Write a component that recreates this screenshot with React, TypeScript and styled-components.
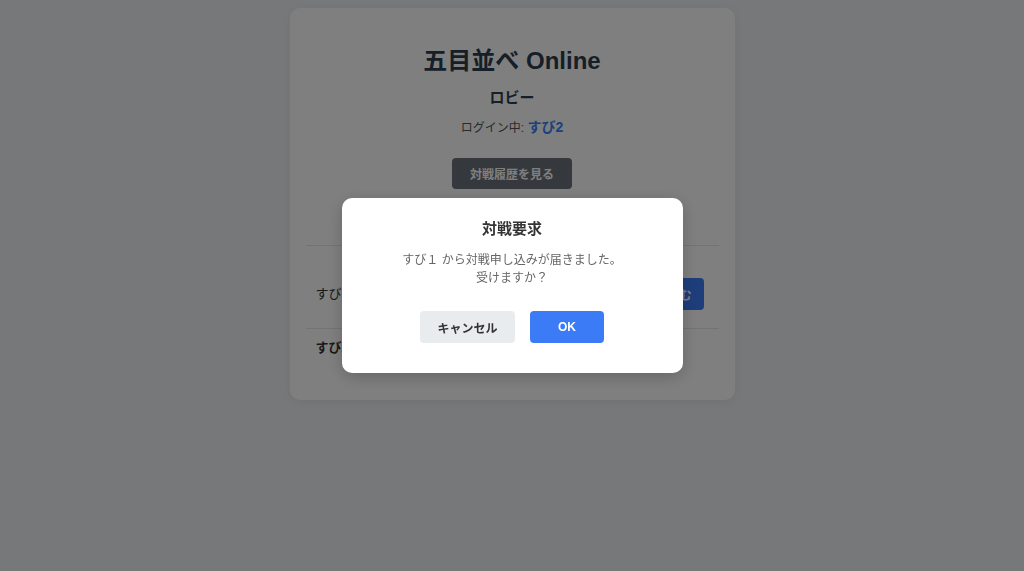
import React from "react";
import styled, { createGlobalStyle } from "styled-components";

const GlobalStyle = createGlobalStyle`
  html, body {
    margin: 0;
    padding: 0;
    background: #eef0f3;
    font-family: "Liberation Sans", "Noto Sans CJK JP", sans-serif;
  }
  * {
    box-sizing: border-box;
  }
`;

const users = [
  { name: "すび1", self: false },
  { name: "すび2（あなた）", self: true },
];

const App: React.FC = () => (
  <>
    <GlobalStyle />
    <Page>
      <Card>
        <Title>五目並べ Online</Title>
        <SubTitle>ロビー</SubTitle>
        <LoginInfo>
          ログイン中: <UserName>すび2</UserName>
        </LoginInfo>
        <HistoryButton>対戦履歴を見る</HistoryButton>
        <UserList>
          {users.map((user) => (
            <UserRow key={user.name} self={user.self}>
              <UserRowName self={user.self}>{user.name}</UserRowName>
              {!user.self && <ChallengeButton>対戦を申し込む</ChallengeButton>}
            </UserRow>
          ))}
        </UserList>
      </Card>
    </Page>

    <Overlay>
      <Modal>
        <ModalTitle>対戦要求</ModalTitle>
        <ModalMessage>
          すび１ から対戦申し込みが届きました。
          <br />
          受けますか？
        </ModalMessage>
        <ModalActions>
          <ModalButton variant="secondary">キャンセル</ModalButton>
          <ModalButton variant="primary">OK</ModalButton>
        </ModalActions>
      </Modal>
    </Overlay>
  </>
);

const Page = styled.div`
  display: flex;
  justify-content: center;
  min-height: 571px;
  padding-top: 8px;
`;

const Card = styled.div`
  display: flex;
  flex-direction: column;
  align-items: center;
  width: 445px;
  height: 392px;
  padding: 38px 16px 0 16px;
  background-color: #ffffff;
  border-radius: 10px;
  box-shadow: 0 2px 8px rgba(0, 0, 0, 0.06);
`;

const Title = styled.h1`
  margin: 0;
  font-size: 24px;
  line-height: 30px;
  font-weight: 700;
  color: #2c3e50;
`;

const SubTitle = styled.h2`
  margin: 10px 0 0 0;
  font-size: 15px;
  line-height: 24px;
  font-weight: 700;
  color: #2c3e50;
`;

const LoginInfo = styled.p`
  margin: 7px 0 0 0;
  font-size: 12px;
  line-height: 20px;
  color: #555555;
`;

const UserName = styled.span`
  font-size: 14px;
  font-weight: 700;
  color: #3b82f6;
`;

const HistoryButton = styled.button`
  margin-top: 20px;
  height: 31px;
  padding: 0 18px;
  border: none;
  border-radius: 4px;
  background-color: #6b7078;
  color: #ffffff;
  font-family: inherit;
  font-size: 12px;
  font-weight: 700;
`;

const UserList = styled.div`
  align-self: stretch;
  display: flex;
  flex-direction: column;
  margin-top: 56px;
`;

const UserRow = styled.div<{ self: boolean }>`
  display: flex;
  align-items: center;
  justify-content: space-between;
  padding: ${({ self }) => (self ? "9px 15px 0 10px" : "32px 15px 18px 10px")};
  border-top: 1px solid #e5e7eb;
`;

const UserRowName = styled.span<{ self: boolean }>`
  font-size: 13px;
  line-height: 20px;
  color: #333333;
  font-weight: ${({ self }) => (self ? 700 : 400)};
`;

const ChallengeButton = styled.button`
  height: 32px;
  padding: 0 12px;
  border: none;
  border-radius: 4px;
  background-color: #3b7cf6;
  color: #ffffff;
  font-family: inherit;
  font-size: 12px;
  font-weight: 700;
`;

const Overlay = styled.div`
  position: fixed;
  inset: 0;
  display: flex;
  align-items: center;
  justify-content: center;
  background-color: rgba(0, 0, 0, 0.5);
`;

const Modal = styled.div`
  display: flex;
  flex-direction: column;
  align-items: center;
  width: 341px;
  height: 175px;
  padding-top: 19px;
  background-color: #ffffff;
  border-radius: 10px;
  box-shadow: 0 4px 16px rgba(0, 0, 0, 0.2);
`;

const ModalTitle = styled.h3`
  margin: 0;
  font-size: 15px;
  line-height: 24px;
  font-weight: 700;
  color: #333333;
`;

const ModalMessage = styled.p`
  margin: 10px 0 0 0;
  font-size: 12px;
  line-height: 18px;
  text-align: center;
  color: #666666;
`;

const ModalActions = styled.div`
  display: flex;
  gap: 15px;
  margin-top: 24px;
`;

const ModalButton = styled.button<{ variant: "primary" | "secondary" }>`
  height: 32px;
  width: ${({ variant }) => (variant === "primary" ? "74px" : "95px")};
  border: none;
  border-radius: 4px;
  font-family: inherit;
  font-size: 12px;
  font-weight: 700;
  background-color: ${({ variant }) =>
    variant === "primary" ? "#3b7cf6" : "#e9ecef"};
  color: ${({ variant }) => (variant === "primary" ? "#ffffff" : "#333333")};
`;

export default App;
